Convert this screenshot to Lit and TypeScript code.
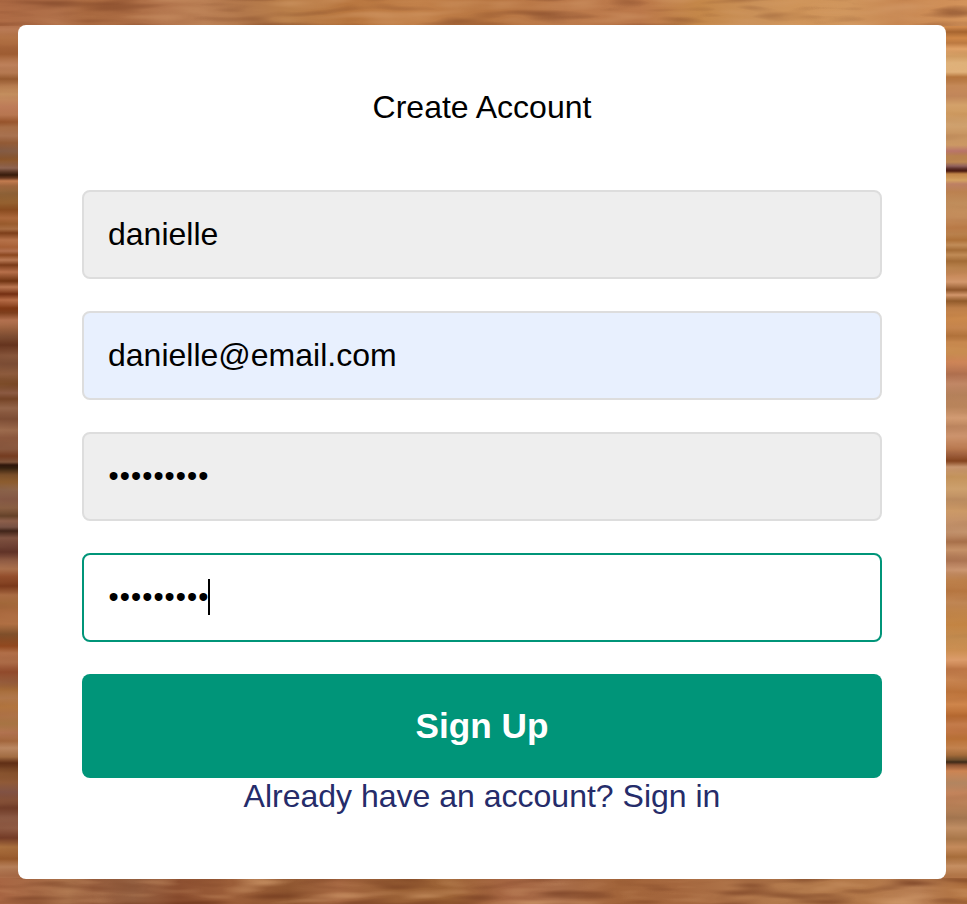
import { LitElement, html, css, svg } from "lit";
import { customElement } from "lit/decorators.js";
import { classMap } from "lit/directives/class-map.js";

type Stop = [number, string];
interface Strip {
  id: string;
  x: number;
  y: number;
  width: number;
  height: number;
  vertical: boolean;
  stops: Stop[];
}

// Grain tones along each visible edge of the table top, keyed by pixel offset.
const strips: Strip[] = [
  {
    id: "left", x: 0, y: 0, width: 484, height: 904, vertical: true,
    stops: [
      [0, "#a7653e"], [11, "#b5734c"], [19, "#a4603b"], [29, "#b87954"], [38, "#b27245"],
      [48, "#a7653a"], [54, "#9f5d33"], [65, "#bd805a"], [73, "#b47850"], [79, "#95592f"],
      [85, "#b3784c"], [94, "#c69160"], [107, "#bd7b58"], [115, "#b77650"], [122, "#96532b"],
      [127, "#a46a43"], [136, "#aa7452"], [143, "#925a35"], [151, "#835b44"], [160, "#885329"],
      [168, "#8f6552"], [172, "#573524"], [175, "#371b0b"], [178, "#65371f"], [181, "#c77f52"],
      [186, "#a1683f"], [193, "#8d6137"], [203, "#94602f"], [210, "#8a4c20"], [218, "#a86438"],
      [224, "#985a2c"], [229, "#a86d43"], [233, "#7d3f1a"], [240, "#b57149"], [247, "#a86137"],
      [251, "#b57351"], [255, "#8c4820"], [260, "#b97954"], [265, "#7b3c1a"], [272, "#b8714c"],
      [281, "#6f3311"], [287, "#b97651"], [294, "#742f12"], [300, "#b56b46"], [308, "#7c3411"],
      [313, "#7f401e"], [320, "#b57351"], [328, "#9c6240"], [337, "#7b4b31"], [345, "#65341e"],
      [355, "#845339"], [364, "#7b4d35"], [374, "#8d5b3d"], [384, "#764624"], [393, "#8c5b43"],
      [399, "#744326"], [408, "#936449"], [419, "#7d4d35"], [430, "#9d6c4e"], [438, "#8b573d"],
      [449, "#86563d"], [456, "#753c20"], [462, "#7f543b"], [465, "#2e160b"], [468, "#34200f"],
      [475, "#7a502b"], [482, "#8c5c2e"], [490, "#8a6249"], [499, "#845845"], [508, "#8a6044"],
      [516, "#654229"], [521, "#8d604c"], [527, "#765144"], [531, "#402419"], [538, "#805443"],
      [552, "#603328"], [561, "#8e5a42"], [569, "#ae7450"], [576, "#944f2d"], [586, "#79381a"],
      [595, "#a96b43"], [603, "#a2683a"], [613, "#a9683e"], [624, "#b07044"], [634, "#80502b"],
      [646, "#91481f"], [653, "#b06e48"], [662, "#ab6b47"], [672, "#934c2d"], [682, "#955c3c"],
      [690, "#a46a38"], [698, "#b0774b"], [706, "#b2753e"], [715, "#ac7045"], [724, "#a77443"],
      [733, "#b27350"], [741, "#a4683e"], [748, "#b98661"], [757, "#a16c42"], [763, "#602f16"],
      [773, "#84502c"], [782, "#905a37"], [792, "#815345"], [800, "#855138"], [808, "#703c28"],
      [817, "#885641"], [828, "#8e5a43"], [838, "#733b26"], [847, "#ab713f"], [859, "#96582b"],
      [867, "#b7805a"], [876, "#a76a46"], [882, "#b87651"], [892, "#9e5932"], [904, "#985231"],
    ],
  },
  {
    id: "right", x: 484, y: 0, width: 483, height: 904, vertical: true,
    stops: [
      [0, "#d5965f"], [12, "#cf8f58"], [21, "#c27c40"], [27, "#d28c4f"], [32, "#a76530"],
      [38, "#cf8747"], [43, "#bb7840"], [49, "#e4a66b"], [56, "#d09b61"], [63, "#dfb27a"],
      [72, "#e0b17a"], [77, "#b7773e"], [86, "#c58958"], [96, "#bf8458"], [105, "#d3a16a"],
      [114, "#cf9b61"], [124, "#d3a571"], [135, "#c69360"], [145, "#cb9864"], [151, "#b8746a"],
      [156, "#bd8652"], [162, "#bc8752"], [166, "#8d5e5b"], [169, "#572a24"], [171, "#4a190f"],
      [174, "#c68a4b"], [180, "#d5a362"], [184, "#bd8064"], [192, "#bb8150"], [203, "#c08d5b"],
      [218, "#c48c5b"], [228, "#b97a47"], [234, "#bb834e"], [240, "#ae7139"], [245, "#c08b57"],
      [250, "#a56d38"], [255, "#c08b56"], [261, "#a16a35"], [268, "#bd8650"], [276, "#c98b5c"],
      [282, "#d2976c"], [290, "#8d5429"], [295, "#d2966b"], [301, "#925b2b"], [308, "#bd7e48"],
      [318, "#cb894b"], [328, "#c4834c"], [336, "#b0713a"], [342, "#cc8c51"], [353, "#c88c50"],
      [362, "#cd8457"], [374, "#b17150"], [384, "#c08665"], [395, "#b4805a"], [407, "#b9845b"],
      [418, "#d29b73"], [426, "#bc855f"], [436, "#cc936d"], [449, "#b97950"], [454, "#a26340"],
      [461, "#85441f"], [467, "#c7956f"], [477, "#c3935b"], [489, "#cda06d"], [500, "#bc8d61"],
      [510, "#cc9a67"], [522, "#c39169"], [532, "#c69670"], [542, "#a9714b"], [550, "#c59168"],
      [561, "#ad7553"], [570, "#cc9772"], [580, "#be824d"], [591, "#b57540"], [603, "#c28856"],
      [613, "#be8247"], [625, "#c48544"], [637, "#c28b4f"], [650, "#cb8e51"], [660, "#dc9c6b"],
      [669, "#bf7847"], [680, "#c88450"], [692, "#ba7139"], [704, "#cf864c"], [716, "#b86b32"],
      [724, "#c37b4a"], [732, "#c27744"], [739, "#b87036"], [748, "#c3824e"], [755, "#a36b3a"],
      [760, "#6b4d2d"], [762, "#3d2917"], [765, "#8b5130"], [771, "#cc8453"], [783, "#b28560"],
      [793, "#c2835b"], [806, "#b78057"], [818, "#a47751"], [828, "#be8c62"], [839, "#a87649"],
      [847, "#c58b5c"], [857, "#a46a38"], [866, "#c68f62"], [875, "#b17648"], [884, "#b8764b"],
      [892, "#985326"], [897, "#8b431b"], [904, "#bb784f"],
    ],
  },
  {
    id: "top", x: 0, y: 0, width: 967, height: 26, vertical: false,
    stops: [
      [0, "#ad6a44"], [58, "#b07049"], [88, "#a8683f"], [118, "#ab6b42"], [163, "#b2744c"],
      [205, "#b97e53"], [243, "#b2774a"], [288, "#ba7f4a"], [348, "#b8763f"], [418, "#c2814a"],
      [488, "#b77541"], [558, "#bc7b4c"], [640, "#bb784a"], [698, "#c48749"], [758, "#ca9159"],
      [798, "#cf9459"], [848, "#d0965d"], [898, "#c78752"], [967, "#d3935b"],
    ],
  },
  {
    id: "bottom", x: 0, y: 878, width: 967, height: 26, vertical: false,
    stops: [
      [0, "#a86643"], [68, "#a76f49"], [93, "#955b3b"], [133, "#945f40"], [178, "#8c4f30"],
      [228, "#9c5e39"], [288, "#8f5630"], [338, "#a56741"], [388, "#9a6036"], [448, "#9c6235"],
      [508, "#a56542"], [558, "#a86c48"], [618, "#a2643a"], [678, "#a4663d"], [738, "#b0754a"],
      [798, "#b37a4c"], [868, "#b37849"], [918, "#b77d52"], [967, "#b0713f"],
    ],
  },
];

@customElement("wood-backdrop")
export class WoodBackdrop extends LitElement {
  static styles = css`
    :host { display: block; width: 100%; height: 100%; }
    .wood { display: block; width: 100%; height: 100%; }
  `;

  private gradient(s: Strip) {
    const length = s.vertical ? s.height : s.width;
    return svg`<linearGradient id=${s.id} x1="0" y1="0" x2=${s.vertical ? 0 : 1} y2=${s.vertical ? 1 : 0}>
      ${s.stops.map(([at, color]) => svg`<stop offset=${at / length} stop-color=${color}></stop>`)}
    </linearGradient>`;
  }

  render() {
    return html`<svg class="wood" viewBox="0 0 967 904" preserveAspectRatio="none" aria-hidden="true">
      <defs>
        ${strips.map((s) => this.gradient(s))}
        <filter id="dark" x="0" y="0" width="100%" height="100%" color-interpolation-filters="sRGB">
          <feTurbulence type="fractalNoise" baseFrequency="0.014 0.09" numOctaves="2" seed="8" />
          <feColorMatrix values="0 0 0 0 0.42  0 0 0 0 0.2  0 0 0 0 0.1  3.2 0 0 0 -1.6" />
        </filter>
        <filter id="light" x="0" y="0" width="100%" height="100%" color-interpolation-filters="sRGB">
          <feTurbulence type="fractalNoise" baseFrequency="0.014 0.09" numOctaves="2" seed="8" />
          <feColorMatrix values="0 0 0 0 0.86  0 0 0 0 0.65  0 0 0 0 0.46  -3 0 0 0 1.4" />
        </filter>
      </defs>
      ${strips.map((s) => svg`<rect x=${s.x} y=${s.y} width=${s.width} height=${s.height} fill="url(#${s.id})"></rect>`)}
      <g opacity="0.45">
        <rect width="967" height="26" filter="url(#dark)" />
        <rect width="967" height="26" filter="url(#light)" />
      </g>
      <g opacity="0.6">
        <rect y="878" width="967" height="26" filter="url(#dark)" />
        <rect y="878" width="967" height="26" filter="url(#light)" />
      </g>
      <g opacity="0.08">
        <rect y="26" width="967" height="852" filter="url(#dark)" />
        <rect y="26" width="967" height="852" filter="url(#light)" />
      </g>
    </svg>`;
  }
}

interface Field {
  label: string;
  value: string;
  masked?: boolean;
  state?: "autofilled" | "focused";
}

const fields: Field[] = [
  { label: "Username", value: "danielle" },
  { label: "Email", value: "danielle@email.com", state: "autofilled" },
  { label: "Password", value: "•••••••••", masked: true },
  { label: "Confirm password", value: "•••••••••", masked: true, state: "focused" },
];

@customElement("app-root")
export class AppRoot extends LitElement {
  static styles = css`
    :host {
      display: grid;
      width: 967px;
      height: 904px;
      overflow: hidden;
      font-family: "Liberation Sans", Arial, sans-serif;
      font-size: 32px;
      line-height: 37px;
      color: #000;
    }
    wood-backdrop, .card { grid-area: 1 / 1; }
    .card {
      position: relative;
      box-sizing: border-box;
      width: 928px;
      height: 854px;
      margin: 25px 0 0 18px;
      padding: 64px 64px 0;
      border-radius: 8px;
      background: #fff;
      display: flex;
      flex-direction: column;
    }
    .title {
      margin: 0 0 64px;
      font-size: 32px;
      font-weight: 400;
      text-align: center;
    }
    .fields { display: flex; flex-direction: column; gap: 32px; }
    .field {
      box-sizing: border-box;
      height: 89px;
      padding: 0 24px;
      border: 2px solid #ddd;
      border-radius: 8px;
      background: #eee;
      display: flex;
      align-items: center;
    }
    .autofilled { background: #e8f0fe; }
    .focused { background: #fff; border-color: #009579; }
    .masked { padding: 0 24px 2px 24.6px; }
    .masked .value { padding-top: 1px; font-size: 29px; letter-spacing: 1.05px; }
    .caret { width: 2px; height: 36px; margin-left: -1.6px; background: #000; }
    .submit {
      height: 104px;
      margin: 32px 0 0;
      padding: 0;
      border: 0;
      border-radius: 8px;
      background: #009579;
      color: #fff;
      font: bold 35.2px/40px "Liberation Sans", Arial, sans-serif;
    }
    .signin { color: #252c6a; text-align: center; text-decoration: none; }
  `;

  render() {
    return html`
      <wood-backdrop></wood-backdrop>
      <form class="card">
        <h1 class="title">Create Account</h1>
        <div class="fields">
          ${fields.map((f) => html`
            <div role="textbox" aria-label=${f.label}
              class=${classMap({
                field: true,
                masked: !!f.masked,
                autofilled: f.state === "autofilled",
                focused: f.state === "focused",
              })}>
              <span class="value">${f.value}</span>${f.state === "focused" ? html`<span class="caret"></span>` : null}
            </div>`)}
        </div>
        <button class="submit" type="button">Sign Up</button>
        <a class="signin" href="#">Already have an account? Sign in</a>
      </form>
    `;
  }
}
